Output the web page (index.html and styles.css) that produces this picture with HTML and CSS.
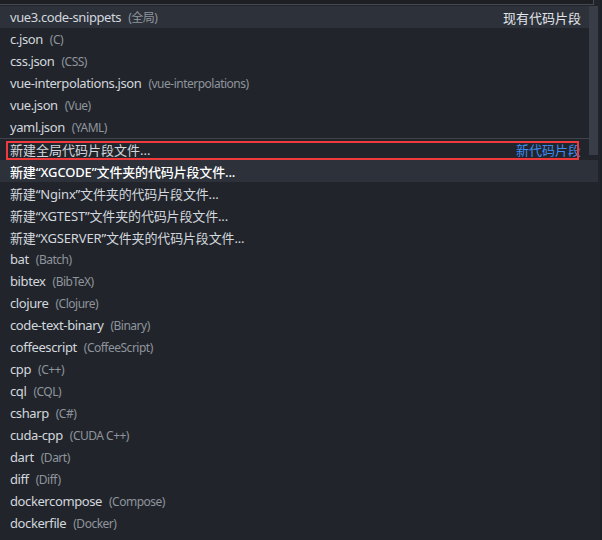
FILE: index.html
```html
<!DOCTYPE html>
<html lang="zh-CN">
<head>
<meta charset="utf-8">
<title>Snippets</title>
<link rel="stylesheet" href="styles.css">
</head>
<body>
<div class="widget">
  <div class="inputbar"><div class="inputbox"></div></div>
  <div class="list">
    <div class="row active"><span class="label latin">vue3.code-snippets</span><span class="desc">(全局)</span><span class="sep-label">现有代码片段</span></div>
    <div class="row"><span class="label latin">c.json</span><span class="desc">(C)</span></div>
    <div class="row"><span class="label latin">css.json</span><span class="desc">(CSS)</span></div>
    <div class="row"><span class="label latin">vue-interpolations.json</span><span class="desc">(vue-interpolations)</span></div>
    <div class="row"><span class="label latin">vue.json</span><span class="desc">(Vue)</span></div>
    <div class="row"><span class="label latin">yaml.json</span><span class="desc">(YAML)</span></div>
    <div class="row separated marked"><span class="label">新建全局代码片段文件...</span><span class="sep-label blue">新代码片段</span><span class="mark"></span></div>
    <div class="row focused"><span class="label mixed">新建“XGCODE”文件夹的代码片段文件...</span></div>
    <div class="row"><span class="label mixed">新建“Nginx”文件夹的代码片段文件...</span></div>
    <div class="row"><span class="label mixed">新建“XGTEST”文件夹的代码片段文件...</span></div>
    <div class="row"><span class="label mixed">新建“XGSERVER”文件夹的代码片段文件...</span></div>
    <div class="row"><span class="label latin">bat</span><span class="desc">(Batch)</span></div>
    <div class="row"><span class="label latin">bibtex</span><span class="desc">(BibTeX)</span></div>
    <div class="row"><span class="label latin">clojure</span><span class="desc">(Clojure)</span></div>
    <div class="row"><span class="label latin">code-text-binary</span><span class="desc">(Binary)</span></div>
    <div class="row"><span class="label latin">coffeescript</span><span class="desc">(CoffeeScript)</span></div>
    <div class="row"><span class="label latin">cpp</span><span class="desc">(C++)</span></div>
    <div class="row"><span class="label latin">cql</span><span class="desc">(CQL)</span></div>
    <div class="row"><span class="label latin">csharp</span><span class="desc">(C#)</span></div>
    <div class="row"><span class="label latin">cuda-cpp</span><span class="desc">(CUDA C++)</span></div>
    <div class="row"><span class="label latin">dart</span><span class="desc">(Dart)</span></div>
    <div class="row"><span class="label latin">diff</span><span class="desc">(Diff)</span></div>
    <div class="row"><span class="label latin">dockercompose</span><span class="desc">(Compose)</span></div>
    <div class="row"><span class="label latin">dockerfile</span><span class="desc">(Docker)</span></div>
    <div class="scrollbar"></div>
  </div>
</div>
</body>
</html>
```

FILE: styles.css
```css
html, body {
  margin: 0;
  padding: 0;
  background: #1d2026;
  height: 540px;
  overflow: hidden;
}
.widget {
  width: 600px;
  height: 540px;
  background: #21252b;
  font-family: "Noto Sans", "Noto Sans CJK SC", sans-serif;
  font-size: 13px;
  color: #d3d7de;
}
.inputbar {
  height: 6px;
  background: #21252b;
}
.inputbox {
  width: 593px;
  height: 4px;
  background: #1d1f23;
  border-right: 1px solid #454b56;
  border-bottom: 1px solid #454b56;
}
.list {
  position: relative;
  width: 598px;
}
.row {
  position: relative;
  display: flex;
  align-items: center;
  height: 22px;
  padding: 0 17px 0 10px;
  white-space: nowrap;
}
.row.active, .row.focused {
  background: #2c313a;
}
.row.focused {
  color: #ffffff;
  font-weight: 500;
}
.row.separated {
  border-top: 1px solid #3e434c;
  height: 21px;
}
.label.latin {
  letter-spacing: -0.4px;
}
.label.mixed {
  letter-spacing: -0.15px;
}
.desc {
  margin-left: 7px;
  font-size: 12px;
  letter-spacing: -0.5px;
  color: #8f949c;
}
.sep-label {
  margin-left: auto;
  color: #e3e6ea;
}
.sep-label.blue {
  color: #3e8cf3;
}
.mark {
  position: absolute;
  left: 6px;
  top: 2px;
  width: 569px;
  height: 15px;
  border: 2px solid #ee3a3c;
}
.scrollbar {
  position: absolute;
  right: 0;
  top: 0;
  width: 9px;
  height: 149px;
  background: #383d47;
}
```
